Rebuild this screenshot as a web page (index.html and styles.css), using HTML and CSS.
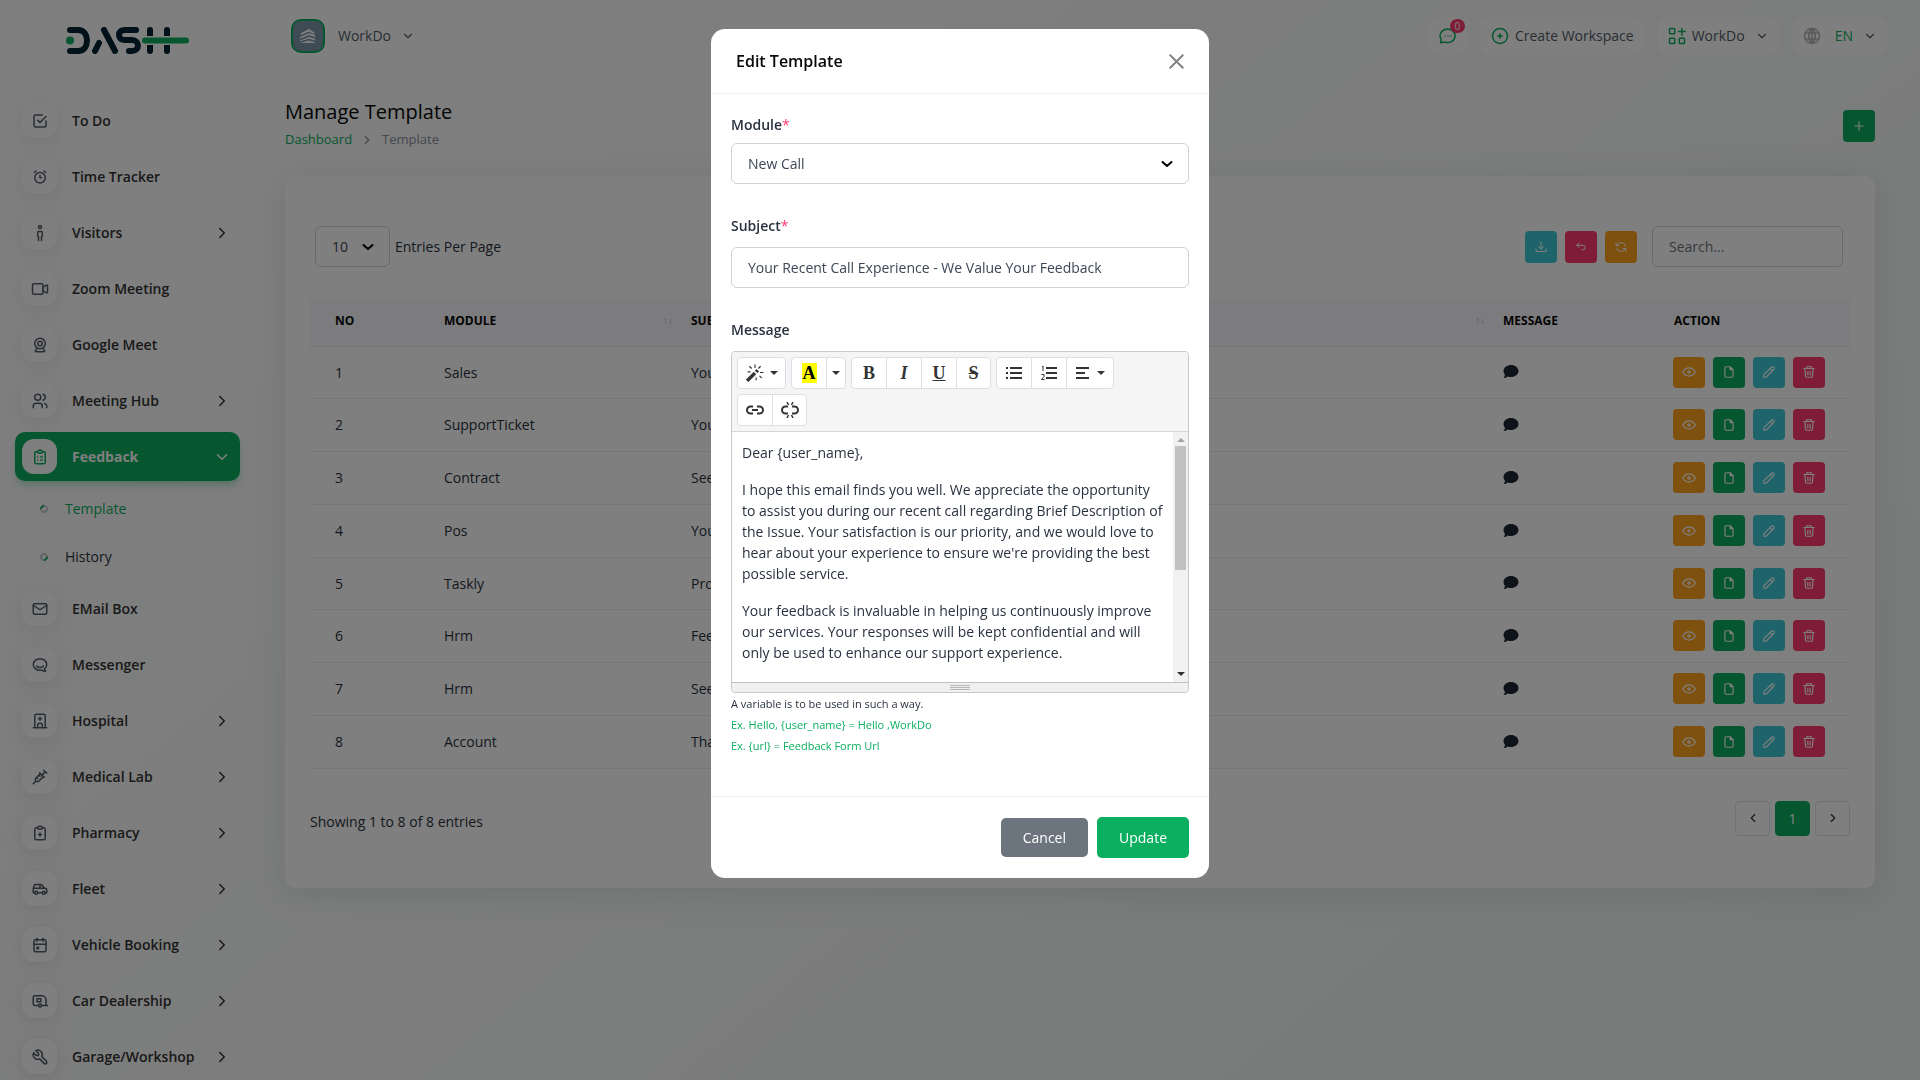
FILE: index.html
```html
<!DOCTYPE html>
<html lang="en">
<head>
<meta charset="utf-8">
<meta name="viewport" content="width=device-width, initial-scale=1">
<title>Manage Template</title>
<link rel="stylesheet" href="styles.css">
</head>
<body>
<svg class="sprite" aria-hidden="true">
  <symbol id="check" viewBox="0 0 24 24"><path d="M9 11l3 3l8-8M20 12v6a2 2 0 0 1-2 2H6a2 2 0 0 1-2-2V6a2 2 0 0 1 2-2h9"/></symbol>
  <symbol id="alarm" viewBox="0 0 24 24"><circle cx="12" cy="13" r="7"/><path d="M12 10v3h2M7 4L4.250 6M17 4l2.750 2"/></symbol>
  <symbol id="man" viewBox="0 0 24 24"><circle cx="12" cy="4" r="2"/><path d="M10 22v-5l-1-1v-5a1 1 0 0 1 1-1h4a1 1 0 0 1 1 1v5l-1 1v5"/></symbol>
  <symbol id="video" viewBox="0 0 24 24"><rect x="2" y="5" width="14" height="14" rx="2"/><path d="M16 10l4-3h2v10h-2l-4-3z"/></symbol>
  <symbol id="cam" viewBox="0 0 24 24"><circle cx="12" cy="10" r="7"/><circle cx="12" cy="10" r="3"/><path d="M8 16l-2.090 3.490A1 1 0 0 0 6.770 21h10.460a1 1 0 0 0 .860-1.510L16 16"/></symbol>
  <symbol id="users" viewBox="0 0 24 24"><circle cx="9" cy="7" r="4"/><path d="M3 21v-2a4 4 0 0 1 4-4h4a4 4 0 0 1 4 4v2M16 3.130a4 4 0 0 1 0 7.750M21 21v-2a4 4 0 0 0-3-3.850"/></symbol>
  <symbol id="clip-list" viewBox="0 0 24 24"><path d="M9 5H7a2 2 0 0 0-2 2v12a2 2 0 0 0 2 2h10a2 2 0 0 0 2-2V7a2 2 0 0 0-2-2h-2"/><rect x="9" y="3" width="6" height="4" rx="2"/><path d="M9 12h.01M13 12h2M9 16h.01M13 16h2"/></symbol>
  <symbol id="mail" viewBox="0 0 24 24"><rect x="3" y="5" width="18" height="14" rx="2"/><path d="M3 7l9 6l9-6"/></symbol>
  <symbol id="hipchat" viewBox="0 0 24 24"><path d="M17.802 17.292s.077-.055.2-.149c1.843-1.425 3-3.490 3-5.789c0-4.286-4.030-7.764-9-7.764s-9 3.478-9 7.764c0 4.288 4.030 7.646 9 7.646c.424 0 1.120-.028 2.088-.084c1.262.820 3.104 1.493 4.716 1.493c.499 0 .734-.410.414-.828c-.486-.596-1.156-1.551-1.416-2.290zM7.500 13.500c2.500 2.500 6.500 2.500 9 0"/></symbol>
  <symbol id="hospital" viewBox="0 0 24 24"><path d="M3 21h18M5 21V5a2 2 0 0 1 2-2h10a2 2 0 0 1 2 2v16M9 21v-4a2 2 0 0 1 2-2h2a2 2 0 0 1 2 2v4M10 9h4M12 7v4"/></symbol>
  <symbol id="vaccine" viewBox="0 0 24 24"><path d="M17 3l4 4M19 5l-4.500 4.500M11.500 6.500l6 6M16.500 11.500L10 18H6v-4l6.500-6.500M7.500 12.500L9 14M10.500 9.500L12 11M3 21l3-3"/></symbol>
  <symbol id="clip-plus" viewBox="0 0 24 24"><path d="M9 5H7a2 2 0 0 0-2 2v12a2 2 0 0 0 2 2h10a2 2 0 0 0 2-2V7a2 2 0 0 0-2-2h-2"/><rect x="9" y="3" width="6" height="4" rx="2"/><path d="M10 14h4M12 12v4"/></symbol>
  <symbol id="car" viewBox="0 0 24 24"><circle cx="7" cy="17" r="2"/><circle cx="17" cy="17" r="2"/><path d="M5 17H3v-6l2-5h9l4 5h1a2 2 0 0 1 2 2v4h-2M15 17H9M3 11h15M12 11V6"/></symbol>
  <symbol id="calendar" viewBox="0 0 24 24"><rect x="4" y="5" width="16" height="16" rx="2"/><path d="M16 3v4M8 3v4M4 11h16M8 15h2v2H8z"/></symbol>
  <symbol id="caravan" viewBox="0 0 24 24"><circle cx="12" cy="18" r="2"/><path d="M22 18h-8M10 18H5a2 2 0 0 1-2-2V7a2 2 0 0 1 2-2h9.500a5.500 5.500 0 0 1 5.500 5.500V18M8 9h5v4H8z"/></symbol>
  <symbol id="tool" viewBox="0 0 24 24"><path d="M7 10h3V7L6.500 3.500a6 6 0 0 1 8 8l6 6a2 2 0 0 1-3 3l-6-6a6 6 0 0 1-8-8L7 10"/></symbol>
  <symbol id="right" viewBox="0 0 24 24"><path d="M9 6l6 6l-6 6"/></symbol>
  <symbol id="left" viewBox="0 0 24 24"><path d="M15 6l-6 6l6 6"/></symbol>
  <symbol id="down" viewBox="0 0 24 24"><path d="M6 9l6 6l6-6"/></symbol>
  <symbol id="plus" viewBox="0 0 24 24"><path d="M12 5v14M5 12h14"/></symbol>
  <symbol id="close" viewBox="0 0 24 24"><path d="M2 2l20 20M22 2L2 22"/></symbol>
  <symbol id="chat" viewBox="0 0 24 24"><path d="M2 21l1-4.500A10 9 0 1 1 7.500 20L2 21M8 12h.01M12 12h.01M16 12h.01"/></symbol>
  <symbol id="circle-plus" viewBox="0 0 24 24"><circle cx="12" cy="12" r="10"/><path d="M9 12h6M12 9v6"/></symbol>
  <symbol id="apps" viewBox="0 0 24 24"><rect x="2" y="2" width="7" height="7" rx="1"/><rect x="2" y="15" width="7" height="7" rx="1"/><rect x="15" y="15" width="7" height="7" rx="1"/><path d="M14 6h9M18.500 2v9"/></symbol>
  <symbol id="globe" viewBox="0 0 24 24"><circle cx="12" cy="12" r="10"/><path d="M3 8h18M3 16h18M12 2v20M12 2c-6 6-6 14 0 20M12 2c6 6 6 14 0 20"/></symbol>
  <symbol id="download" viewBox="0 0 24 24"><path d="M2 16v5h20v-5M7 11l5 5l5-5M12 2v14"/></symbol>
  <symbol id="undo" viewBox="0 0 24 24"><path d="M8 13L3.500 8.500L8 4M4 8.500h12a4.500 4.500 0 0 1 0 9h-2"/></symbol>
  <symbol id="refresh" viewBox="0 0 24 24"><path d="M21 10A9 9 0 0 0 4.500 7.500M2 3v6h6M3 14a9 9 0 0 0 16.500 2.500M22 21v-6h-6"/></symbol>
  <symbol id="eye" viewBox="0 0 24 24"><circle cx="12" cy="12" r="2"/><path d="M1 12q4.500-7 11-7t11 7q-4.500 7-11 7t-11-7"/></symbol>
  <symbol id="file" viewBox="0 0 24 24"><path d="M14 3v5h5M17 21H7a2 2 0 0 1-2-2V5a2 2 0 0 1 2-2h7l5 5v11a2 2 0 0 1-2 2z"/></symbol>
  <symbol id="pencil" viewBox="0 0 24 24"><path d="M3 21v-4L16 4a2.800 2.800 0 0 1 4 4L7 21H3M14 6l4 4"/></symbol>
  <symbol id="trash" viewBox="0 0 24 24"><path d="M3 6h18M10 11v6M14 11v6M5 6l1 13a2 2 0 0 0 2 2h8a2 2 0 0 0 2-2l1-13M8 6V3h8v3"/></symbol>
  <symbol id="comment" viewBox="0 0 16 14"><path d="M8 0c4 0 7.500 2.600 7.500 6S12 12 8 12q-1.700 0-3.200-.6Q3 13 .5 13q1.300-1.500 1.500-3Q.5 8.500.5 6C.5 2.600 4 0 8 0"/></symbol>
</svg>

<div class="app">
  <aside class="sidebar">
    <a class="logo" href="#" aria-label="Dash">
      <svg viewBox="0 0 123 27" width="123" height="27">
        <g fill="none" stroke="#002333" stroke-width="6" stroke-linecap="round" stroke-linejoin="round">
          <path d="M4 3h8c6 0 9 5 9 10.500S18 24 12 24H4"/>
          <path d="M33 16l-4 8M38 3l11 21"/>
          <path d="M70 3H59c-4 0-6 2-6 5s2 5 6 5h7c4 0 6 3 6 5.500s-2 5.500-6 5.500h-3"/>
          <path d="M84 3v21M101 3v21"/>
        </g>
        <circle cx="4" cy="13.500" r="4" fill="#0caf60"/>
        <path d="M79 13.500h41" stroke="#fff" stroke-width="9"/>
        <path d="M79 13.500h41" stroke="#0caf60" stroke-width="6" stroke-linecap="round"/>
      </svg>
    </a>
    <nav class="menu">
      <a class="item" href="#"><span class="tile"><svg class="ico"><use href="#check"/></svg></span><span class="name">To Do</span></a>
      <a class="item" href="#"><span class="tile"><svg class="ico"><use href="#alarm"/></svg></span><span class="name">Time Tracker</span></a>
      <a class="item" href="#"><span class="tile"><svg class="ico"><use href="#man"/></svg></span><span class="name">Visitors</span><svg class="ico"><use href="#right"/></svg></a>
      <a class="item" href="#"><span class="tile"><svg class="ico"><use href="#video"/></svg></span><span class="name">Zoom Meeting</span></a>
      <a class="item" href="#"><span class="tile"><svg class="ico"><use href="#cam"/></svg></span><span class="name">Google Meet</span></a>
      <a class="item" href="#"><span class="tile"><svg class="ico"><use href="#users"/></svg></span><span class="name">Meeting Hub</span><svg class="ico"><use href="#right"/></svg></a>
      <a class="item active" href="#"><span class="tile"><svg class="ico"><use href="#clip-list"/></svg></span><span class="name">Feedback</span><svg class="ico"><use href="#down"/></svg></a>
      <div class="submenu">
        <a class="sub current" href="#"><span class="ring"></span>Template</a>
        <a class="sub" href="#"><span class="ring"></span>History</a>
      </div>
      <a class="item" href="#"><span class="tile"><svg class="ico"><use href="#mail"/></svg></span><span class="name">EMail Box</span></a>
      <a class="item" href="#"><span class="tile"><svg class="ico"><use href="#hipchat"/></svg></span><span class="name">Messenger</span></a>
      <a class="item" href="#"><span class="tile"><svg class="ico"><use href="#hospital"/></svg></span><span class="name">Hospital</span><svg class="ico"><use href="#right"/></svg></a>
      <a class="item" href="#"><span class="tile"><svg class="ico"><use href="#vaccine"/></svg></span><span class="name">Medical Lab</span><svg class="ico"><use href="#right"/></svg></a>
      <a class="item" href="#"><span class="tile"><svg class="ico"><use href="#clip-plus"/></svg></span><span class="name">Pharmacy</span><svg class="ico"><use href="#right"/></svg></a>
      <a class="item" href="#"><span class="tile"><svg class="ico"><use href="#car"/></svg></span><span class="name">Fleet</span><svg class="ico"><use href="#right"/></svg></a>
      <a class="item" href="#"><span class="tile"><svg class="ico"><use href="#calendar"/></svg></span><span class="name">Vehicle Booking</span><svg class="ico"><use href="#right"/></svg></a>
      <a class="item" href="#"><span class="tile"><svg class="ico"><use href="#caravan"/></svg></span><span class="name">Car Dealership</span><svg class="ico"><use href="#right"/></svg></a>
      <a class="item" href="#"><span class="tile"><svg class="ico"><use href="#tool"/></svg></span><span class="name">Garage/Workshop</span><svg class="ico"><use href="#right"/></svg></a>
    </nav>
  </aside>

  <div class="page">
    <header class="topbar">
      <button class="pill account" type="button">
        <span class="avatar"><svg viewBox="0 0 20 18" width="18" height="16"><path d="M2 6l9-5l6 4v2l-6-3l-9 4zM1 10l10-4l7 2v2l-7-2l-10 4zM1 14l10-4l7 2v2l-7-2l-10 3zM1 17l10-3l7 2v1z"/></svg></span>
        <span>WorkDo</span><svg class="ico caret"><use href="#down"/></svg>
      </button>
      <div class="tools">
        <button class="pill chat" type="button" aria-label="Messages"><svg class="ico green"><use href="#chat"/></svg><span class="count">0</span></button>
        <button class="pill" type="button"><svg class="ico green"><use href="#circle-plus"/></svg><span>Create Workspace</span></button>
        <button class="pill" type="button"><svg class="ico green"><use href="#apps"/></svg><span>WorkDo</span><svg class="ico caret"><use href="#down"/></svg></button>
        <button class="pill lang" type="button"><svg class="ico globe"><use href="#globe"/></svg><span>EN</span><svg class="ico caret"><use href="#down"/></svg></button>
      </div>
    </header>

    <main>
      <div class="heading">
        <div>
          <h1>Manage Template</h1>
          <nav class="crumbs"><a href="#">Dashboard</a><svg class="ico"><use href="#right"/></svg><span>Template</span></nav>
        </div>
        <button class="sq bg-green" type="button" aria-label="Create"><svg class="ico"><use href="#plus"/></svg></button>
      </div>

      <section class="card">
        <div class="controls">
          <label class="entries"><select class="field"><option>10</option></select>Entries Per Page</label>
          <div class="actions">
            <button class="sq bg-teal" type="button" aria-label="Export"><svg class="ico"><use href="#download"/></svg></button>
            <button class="sq bg-pink" type="button" aria-label="Reset"><svg class="ico"><use href="#undo"/></svg></button>
            <button class="sq bg-orange" type="button" aria-label="Reload"><svg class="ico"><use href="#refresh"/></svg></button>
            <input class="field search" type="search" placeholder="Search..." aria-label="Search">
          </div>
        </div>
        <table>
          <colgroup><col class="c-no"><col class="c-module"><col><col class="c-message"><col class="c-action"></colgroup>
          <thead><tr><th>No</th><th><span class="sort">Module<i>↑↓</i></span></th><th><span class="sort">Subject<i>↑↓</i></span></th><th>Message</th><th>Action</th></tr></thead>
          <tbody id="rows"></tbody>
        </table>
        <div class="card-foot">
          <span class="showing">Showing 1 to 8 of 8 entries</span>
          <div class="pages">
            <button type="button" aria-label="Previous"><svg class="ico"><use href="#left"/></svg></button>
            <button type="button" class="on">1</button>
            <button type="button" aria-label="Next"><svg class="ico"><use href="#right"/></svg></button>
          </div>
        </div>
      </section>
    </main>
  </div>
</div>

<div class="backdrop">
  <form class="modal" role="dialog" aria-labelledby="modal-title">
    <div class="modal-head">
      <h2 id="modal-title">Edit Template</h2>
      <button class="close" type="button" aria-label="Close"><svg class="ico"><use href="#close"/></svg></button>
    </div>
    <div class="modal-body">
      <div class="group tight">
        <label for="module">Module<b>*</b></label>
        <select class="field" id="module"><option>New Call</option></select>
      </div>
      <div class="group">
        <label for="subject">Subject<b>*</b></label>
        <input class="field" id="subject" type="text" value="Your Recent Call Experience - We Value Your Feedback">
      </div>
      <div class="group">
        <label id="msg-label">Message</label>
        <div class="editor">
          <div class="toolbar">
            <div class="btns"><button class="wide" type="button" aria-label="Style"><svg viewBox="0 0 16 16" width="18" height="18"><path d="M1 15l7-7" stroke-width="3"/><path d="M9 7l1.500-1.500" stroke-width="3"/><path d="M8 .5v3M3 2l2 2M1.500 7h2.500M13 2l-2 2M12.500 7.500h3M12 10.500l2 2M9 12v2.500"/></svg><span class="tri"></span></button></div>
            <div class="btns"><button class="serif" type="button" aria-label="Text color"><mark>A</mark></button><button class="slim" type="button" aria-label="More colors"><span class="tri"></span></button></div>
            <div class="btns serif"><button type="button">B</button><button type="button"><em>I</em></button><button type="button"><u>U</u></button><button type="button"><s>S</s></button></div>
            <div class="btns">
              <button type="button" aria-label="Bulleted list"><svg viewBox="0 0 16 16" width="16" height="16"><path d="M0 3h2M0 8h2M0 13h2M4 3h12M4 8h12M4 13h12" stroke-width="2"/></svg></button>
              <button type="button" aria-label="Numbered list"><svg viewBox="0 0 16 16" width="16" height="16"><path d="M5 3h11M5 8h11M5 13h11" stroke-width="2"/><path d="M1 2l1-1v5M.5 9.500h2.500v2L.5 14.500H3.500" stroke-width="1"/></svg></button>
              <button class="wide" type="button" aria-label="Align"><svg viewBox="0 0 16 16" width="16" height="16"><path d="M1 3h13M1 8h9M1 13h13" stroke-width="2"/></svg><span class="tri"></span></button>
            </div>
            <div class="btns">
              <button type="button" aria-label="Link"><svg viewBox="0 0 18 16" width="18" height="16"><path d="M7 4.500H4.500a3.500 3.500 0 0 0 0 7H7M11 4.500h2.500a3.500 3.500 0 0 1 0 7H11M6 8h6" stroke-width="2"/></svg></button>
              <button type="button" aria-label="Unlink"><svg viewBox="0 0 18 16" width="18" height="16"><path d="M7 4.500H4.500a3.500 3.500 0 0 0 0 7H7M11 4.500h2.500a3.500 3.500 0 0 1 0 7H11" stroke-width="2"/><path d="M6 0l1.500 3M12 0l-1.500 3M6 16l1.500-3M12 16l-1.500-3" stroke-width="1.500"/></svg></button>
            </div>
          </div>
          <div class="edit-area">
            <div class="edit-text" contenteditable="true" role="textbox" aria-labelledby="msg-label">
              <p>Dear {user_name},</p>
              <p>I hope this email finds you well. We appreciate the opportunity to assist you during our recent call regarding Brief Description of the Issue. Your satisfaction is our priority, and we would love to hear about your experience to ensure we're providing the best possible service.</p>
              <p>Your feedback is invaluable in helping us continuously improve our services. Your responses will be kept confidential and will only be used to enhance our support experience.</p>
            </div>
            <div class="scroll" aria-hidden="true"><span class="tri up"></span><span class="thumb"></span><span class="tri"></span></div>
          </div>
          <div class="grip"><span></span></div>
        </div>
        <div class="hints"><p>A variable is to be used in such a way.</p><p class="ex">Ex. Hello, {user_name} = Hello ,WorkDo</p><p class="ex">Ex. {url} = Feedback Form Url</p></div>
      </div>
    </div>
    <div class="modal-foot">
      <button class="btn cancel" type="button">Cancel</button>
      <button class="btn update" type="submit">Update</button>
    </div>
  </form>
</div>
<script src="rows.js"></script>
</body>
</html>
```
FILE: rows.js
```js
const rows = [
  ["Sales", "Your"],
  ["SupportTicket", "Your"],
  ["Contract", "See"],
  ["Pos", "Your"],
  ["Taskly", "Pro"],
  ["Hrm", "Feed"],
  ["Hrm", "See"],
  ["Account", "Than"]
];
const button = ([color, icon, label]) =>
  `<button class="sq bg-${color}" type="button" aria-label="${label}"><svg class="ico"><use href="#${icon}"/></svg></button>`;
const buttons = [
  ["orange", "eye", "View"],
  ["green", "file", "Details"],
  ["teal", "pencil", "Edit"],
  ["pink", "trash", "Delete"]
].map(button).join("");
document.getElementById("rows").innerHTML = rows.map(([module, subject], i) =>
  `<tr><td>${i + 1}</td><td>${module}</td><td>${subject}</td>` +
  `<td><a href="#" aria-label="Message"><svg class="comment"><use href="#comment"/></svg></a></td>` +
  `<td><div class="row-actions">${buttons}</div></td></tr>`).join("");
```
FILE: styles.css
```css
* { box-sizing: border-box; }

body {
  margin: 0;
  height: 100vh;
  overflow: hidden;
  font: 14px/21px "Open Sans", "Noto Sans", sans-serif;
  color: #293240;
  background: linear-gradient(141deg, #ffffff 3%, #f0f4f3 100%);
}
h1, h2, p { margin: 0; }
a { color: inherit; text-decoration: none; }
button, input, select { font: inherit; color: inherit; }
button { display: flex; align-items: center; justify-content: center; padding: 0; border: 0; background: none; cursor: pointer; }

.sprite { display: none; }
.ico {
  flex: none;
  width: 18px;
  height: 18px;
  fill: none;
  stroke: currentColor;
  stroke-width: 2;
  stroke-linecap: round;
  stroke-linejoin: round;
}
.green { color: #0caf60; }
.bg-green { background: #0caf60; }
.bg-teal { background: #3ec9d6; }
.bg-pink { background: #ff3a6e; }
.bg-orange { background: #ffa21d; }

.app { display: flex; height: 100vh; }

/* Sidebar */
.sidebar { flex: none; width: 280px; height: 100vh; overflow: hidden; }
.logo { display: flex; align-items: center; height: 80px; padding-left: 66px; }
.menu { padding: 16px 40px 0 15px; }
.item {
  display: flex;
  align-items: center;
  height: 49px;
  margin-bottom: 7px;
  padding: 0 9px 0 7px;
  border-radius: 10px;
  font-weight: 600;
  color: #333333;
}
.tile {
  display: flex;
  align-items: center;
  justify-content: center;
  width: 35px;
  height: 35px;
  margin-right: 15px;
  border-radius: 12px;
  background: #ffffff;
  color: #525b69;
  box-shadow: 0 4px 18px rgba(140, 145, 150, 0.2);
}
.name { flex: 1; }
.item.active { background: #0caf60; color: #ffffff; font-weight: 700; box-shadow: 0 5px 7px -1px rgba(12, 175, 96, 0.3); }
.active .tile { color: #0caf60; box-shadow: none; }
.submenu { padding-bottom: 7px; }
.sub { display: flex; align-items: center; height: 48px; padding: 0 0 7px 25px; }
.sub + .sub { margin-bottom: -7px; }
.ring {
  width: 8px;
  height: 8px;
  margin-right: 17px;
  border: 2px solid #c5cad0;
  border-bottom-color: #0caf60;
  border-radius: 50%;
  transform: rotate(-45deg);
}
.current { color: #0caf60; }
.current .ring { border-color: #0caf60 #c5cad0 #c5cad0; }

/* Top bar */
.page { flex: 1; min-width: 0; padding: 13px 45px 0 5px; }
.topbar { display: flex; justify-content: space-between; height: 45px; margin-right: -14px; }
.tools { display: flex; align-items: center; gap: 10px; }
.pill {
  gap: 6px;
  height: 40px;
  padding: 0 11px;
  border: 1px solid #f8f9f9;
  border-radius: 12px;
  background: #ffffff;
  color: #525b69;
}
.pill .caret { width: 14px; height: 14px; margin-left: 4px; }
.account { height: 45px; padding: 0 5px; }
.account .avatar { margin-right: 7px; }
.avatar {
  display: flex;
  align-items: center;
  justify-content: center;
  width: 34px;
  height: 34px;
  border: 2px solid #0caf60;
  border-radius: 10px;
  background: #7d97a9;
  fill: #ffffff;
}
.chat { position: relative; width: 42px; padding: 0; }
.count {
  position: absolute;
  top: 2px;
  right: 3px;
  width: 15px;
  height: 14px;
  border-radius: 7px;
  background: #ff3a6e;
  color: #ffffff;
  font-size: 10px;
  line-height: 14px;
}
.lang { color: #0caf60; }
.lang span { margin-left: 8px; }
.lang .caret { color: #525b69; }
.globe { color: #b5b5b5; }

/* Page heading */
.heading { display: flex; align-items: center; justify-content: space-between; padding: 40px 0 23px; }
h1 { font-size: 20px; line-height: 28px; font-weight: 500; color: #060606; }
.crumbs { display: flex; align-items: center; gap: 8px; height: 27px; font-size: 13px; color: #8a9099; }
.crumbs a { color: #0caf60; }
.crumbs .ico { width: 14px; height: 14px; }
.sq { flex: none; width: 32px; height: 32px; border-radius: 4px; color: #ffffff; }
.sq .ico { width: 14px; height: 14px; }

/* Card */
.card { padding: 50px 25px 52px; border-radius: 10px; background: #ffffff; box-shadow: 0 6px 30px rgba(170, 178, 185, 0.3); }
.controls { display: flex; align-items: center; justify-content: space-between; padding: 0 7px 0 5px; margin-bottom: 32px; }
.entries { display: flex; align-items: center; gap: 5px; }
.entries .field { width: 75px; }
.actions { display: flex; align-items: center; gap: 8px; }
.actions .ico { width: 12px; height: 12px; }
.field {
  width: 100%;
  height: 41px;
  padding: 0 16px;
  border: 1px solid #ced4da;
  border-radius: 6px;
  outline: 0;
  background: #ffffff;
  color: #3c4654;
}
select.field {
  appearance: none;
  background: #ffffff url("data:image/svg+xml,%3Csvg xmlns='http://www.w3.org/2000/svg' viewBox='0 0 12 12'%3E%3Cpath d='M1.500 4l4.500 4l4.500-4' fill='none' stroke='%23000' stroke-width='2' stroke-linecap='round' stroke-linejoin='round'/%3E%3C/svg%3E") right 15px center / 12px 12px no-repeat;
}
.search { width: 191px; margin-left: 7px; }
.search::placeholder { color: #6c757d; opacity: 1; }

table { width: 100%; table-layout: fixed; border-collapse: collapse; }
.c-no { width: 116px; }
.c-module { width: 247px; }
.c-message { width: 171px; }
.c-action { width: 194px; }
th, td { padding: 0 0 0 18px; border-bottom: 1px solid #e9ecef; text-align: left; }
th:first-child, td:first-child { padding-left: 25px; }
th { height: 47px; padding-bottom: 4px; background: #f8f9fd; color: #060606; font-size: 12px; font-weight: 700; text-transform: uppercase; }
td { height: 53px; }
tr:nth-child(4n+1) td { height: 52px; }
td:last-child { padding-left: 17px; }
.sort { display: flex; justify-content: space-between; }
.sort i { font: 10px/21px "Liberation Sans", sans-serif; letter-spacing: 0; color: #b8bcc0; }
.comment { display: block; width: 16px; height: 14px; fill: #1c2733; }
.row-actions { display: flex; gap: 8px; }
.row-actions .sq { height: 31px; }
.card-foot { display: flex; justify-content: space-between; align-items: center; padding-top: 32px; }
.showing { padding-top: 6px; }
.pages { display: flex; gap: 5px; }
.pages button { width: 35px; height: 35px; border: 1px solid #dee2e6; border-radius: 4px; }
.pages .ico { width: 14px; height: 14px; }
.pages .on { border-color: #0caf60; background: #0caf60; color: #ffffff; }

/* Modal */
.backdrop {
  position: fixed;
  inset: 0;
  display: flex;
  align-items: flex-start;
  justify-content: center;
  padding-top: 29px;
  background: rgba(0, 0, 0, 0.5);
}
.modal { width: 498px; border-radius: 14px; background: #ffffff; }
.modal-head { display: flex; align-items: center; justify-content: space-between; height: 65px; padding: 0 25px; border-bottom: 1px solid #f1f1f1; }
h2 { font-size: 16px; line-height: 24px; font-weight: 600; color: #060606; }
.close { color: #808080; }
.close .ico { width: 15px; height: 15px; stroke-width: 3; }
.modal-body { padding: 20px 20px 40px; }
.group + .group { margin-top: 31px; }
.group > label { display: block; margin-bottom: 11px; font-weight: 600; }
.group.tight > label { margin-bottom: 8px; }
.group b { color: #ff3a6e; font-weight: 400; }

.editor { border: 1px solid #c8cacc; border-radius: 4px; overflow: hidden; }
.toolbar { display: flex; flex-wrap: wrap; gap: 5px; padding: 5px; background: #f5f5f5; border-bottom: 1px solid #d4d6d8; }
.btns { display: flex; border: 1px solid #dae0e5; border-radius: 4px; background: #ffffff; }
.btns button { width: 35px; height: 30px; }
.btns button:first-child, .btns button:last-child { width: 34px; }
.btns button + button { border-left: 1px solid #dae0e5; }
.btns button.wide { width: 47px; gap: 6px; }
.btns button.slim { width: 19px; }
.btns svg { fill: none; stroke: #333333; }
.serif { font: 700 18px/20px "Liberation Serif", serif; color: #333333; }
.btns mark { padding: 0 1px; background: #ffff00; color: #000000; }
.tri { border: 4px solid transparent; border-top-color: #333333; border-bottom: 0; }
.edit-area { display: flex; height: 250px; }
.edit-text { flex: 1; padding: 10px; overflow: hidden; outline: 0; }
.edit-text p { margin-bottom: 16px; }
.scroll { display: flex; flex-direction: column; align-items: center; width: 15px; padding: 6px 0; background: #f1f1f1; }
.up { margin-bottom: 4px; border: 4px solid transparent; border-top: 0; border-bottom-color: #a3a3a3; }
.thumb { width: 11px; height: 124px; margin-bottom: auto; background: #c1c1c1; }
.grip { display: flex; align-items: center; justify-content: center; height: 10px; border-top: 1px solid #c0c2c4; background: #f0f0f0; }
.grip span { width: 20px; height: 5px; background: repeating-linear-gradient(#b5b5b5 0 1px, transparent 1px 2px); }
.hints { font-size: 11px; }
.ex { color: #0caf60; }

.modal-foot { display: flex; align-items: center; justify-content: flex-end; gap: 9px; padding: 20px; border-top: 1px solid #f1f1f1; }
.btn { height: 39px; padding: 0 22px; border-radius: 5px; color: #ffffff; }
.cancel { background: #6c757d; }
.update { height: 41px; background: #0caf60; }
```
